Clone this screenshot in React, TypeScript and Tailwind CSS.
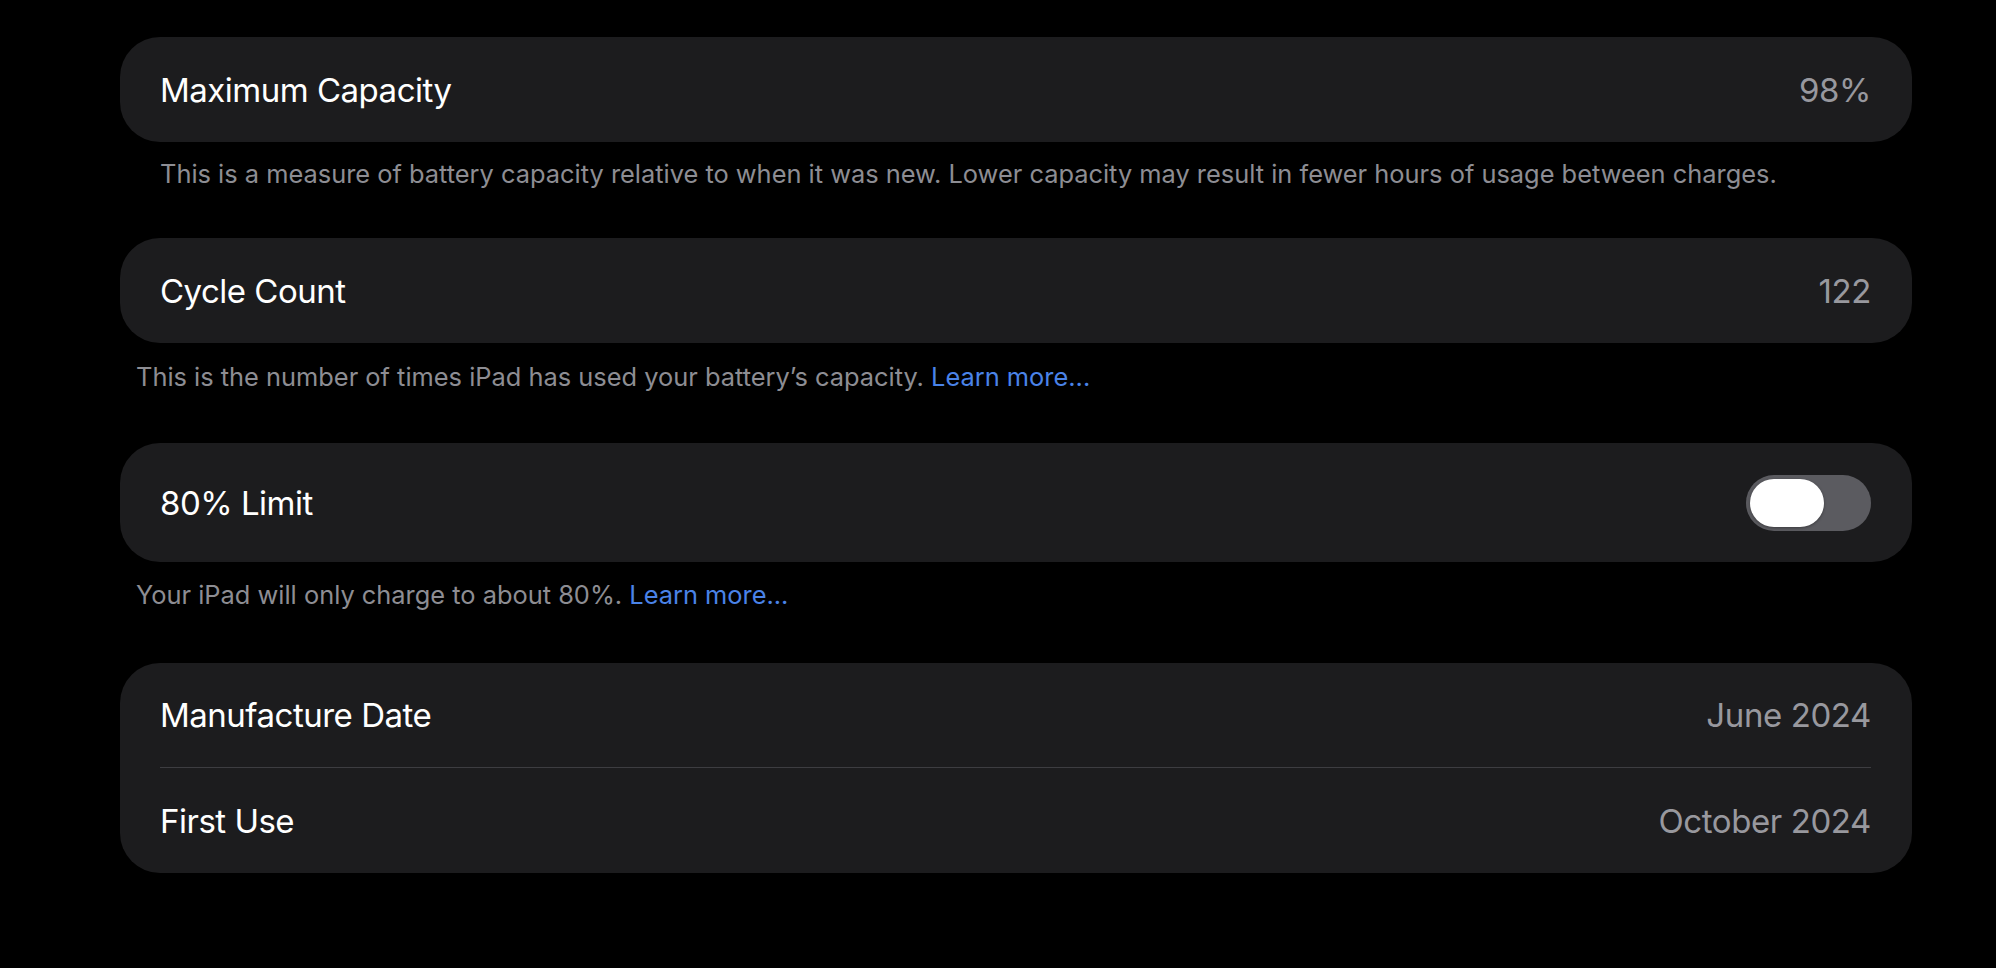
import React from 'react';

const font = { fontFamily: 'Inter, "Noto Sans", sans-serif' };

function Row({ label, value }: { label: string; value: React.ReactNode }) {
  return (
    <div className="flex items-center justify-between pl-[40px] pr-[41px] pt-[2px] h-full">
      <span className="text-[33px] text-white tracking-[-0.5px]">{label}</span>
      {typeof value === 'string' ? (
        <span className="text-[33px] text-[#98989e] tracking-[-0.4px]">{value}</span>
      ) : (
        value
      )}
    </div>
  );
}

function Toggle() {
  return (
    <div className="-mt-[2px] w-[125px] h-[56px] rounded-full bg-[#5b5b60] p-[4px] flex items-center">
      <div className="w-[74px] h-[48px] rounded-full bg-white shadow-[0_1px_3px_rgba(0,0,0,0.35)]" />
    </div>
  );
}

export default function App() {
  return (
    <div style={font} className="min-h-[968px] bg-black pl-[120px] pr-[84px] pt-[37px]">
      <div className="h-[105px] rounded-[40px] bg-[#1c1c1e]">
        <Row label="Maximum Capacity" value="98%" />
      </div>
      <p className="mt-[16px] pl-[40px] text-[25.4px] leading-[32px] text-[#8d8d93]">
        This is a measure of battery capacity relative to when it was new. Lower capacity may result in fewer hours of usage between charges.
      </p>

      <div className="mt-[48px] h-[105px] rounded-[40px] bg-[#1c1c1e]">
        <Row label="Cycle Count" value="122" />
      </div>
      <p className="mt-[18px] pl-[16px] text-[25.4px] leading-[32px] text-[#8d8d93]">
        This is the number of times iPad has used your battery’s capacity.{' '}
        <span className="text-[#4a83e8]">Learn more...</span>
      </p>

      <div className="mt-[50px] h-[119px] rounded-[40px] bg-[#1c1c1e]">
        <Row label="80% Limit" value={<Toggle />} />
      </div>
      <p className="mt-[17px] pl-[16px] text-[25.4px] leading-[32px] text-[#8d8d93]">
        Your iPad will only charge to about 80%.{' '}
        <span className="text-[#4a83e8]">Learn more...</span>
      </p>

      <div className="mt-[52px] rounded-[40px] bg-[#1c1c1e]">
        <div className="h-[104px]">
          <Row label="Manufacture Date" value="June 2024" />
        </div>
        <div className="ml-[40px] mr-[41px] h-px bg-[#3d3d41]" />
        <div className="h-[105px]">
          <Row label="First Use" value="October 2024" />
        </div>
      </div>
    </div>
  );
}
